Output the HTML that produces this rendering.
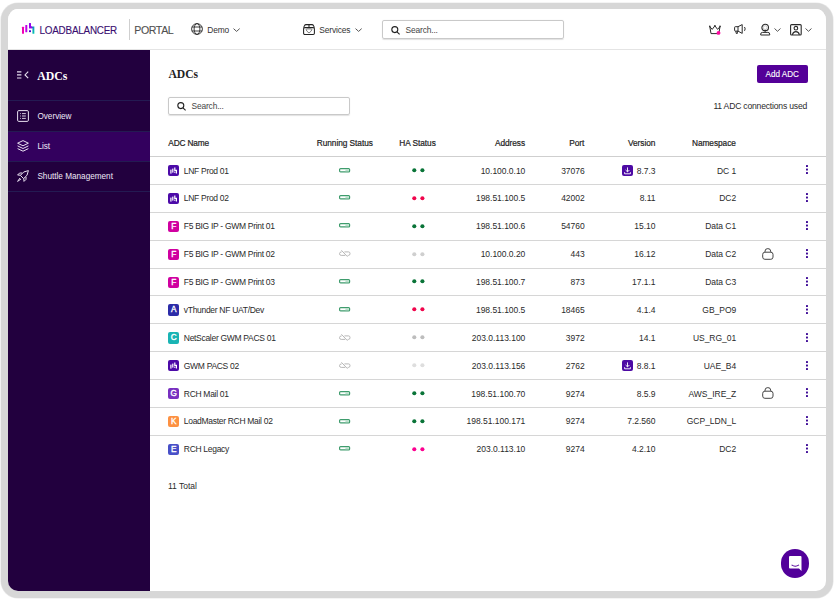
<!DOCTYPE html>
<html><head><meta charset="utf-8">
<style>
*{margin:0;padding:0;box-sizing:border-box}
html,body{width:834px;height:600px;background:#fff;overflow:hidden;font-family:"Liberation Sans",sans-serif;color:#2b2b2b}
.frame{position:absolute;left:1px;top:3px;width:832px;height:595px;border:7px solid #d7d7d7;border-top-width:6px;border-radius:17px;box-shadow:0 0 0 0.6px #e9e9e9;overflow:hidden;background:#fff}
.in{position:absolute;left:-8px;top:-9px;width:834px;height:600px}
.a{position:absolute;white-space:nowrap;line-height:normal}
svg{position:absolute;overflow:visible}
.hdr{position:absolute;left:8px;top:8px;width:818px;height:42px;background:#fff;border-bottom:1px solid #e4e4e4}
.side{position:absolute;left:8px;top:50px;width:142px;height:541px;background:#22003e}
.sep{position:absolute;left:8px;width:142px;height:1px;background:#241a52}
.act{position:absolute;left:8px;top:131px;width:142px;height:30px;background:#33005e}
.st{color:#eee8f6;font-size:8.2px}
.row{position:absolute;left:150px;width:676px;height:28px;border-bottom:1px solid #d6d6d6}
.row .a{font-size:8.5px;letter-spacing:-0.2px;color:#2a2a2a;top:8.55px}
.ic{position:absolute;left:18px;top:8.1px;width:11.3px;height:11.2px;border-radius:2px;color:#fff;font-size:8.2px;font-weight:normal;-webkit-text-stroke:0.35px #fff;text-align:center;line-height:12.3px}
.row .r{text-align:right;letter-spacing:-0.02px}
.th{font-size:8.3px;letter-spacing:-0.05px;color:#222;-webkit-text-stroke:0.2px #222}
</style></head><body>
<div class="frame"><div class="in">

<!-- HEADER -->
<div class="hdr"></div>
<!-- logo -->
<svg style="left:0;top:0" width="834" height="60">
 <defs>
  <linearGradient id="lg1" x1="0" y1="0" x2="1" y2="1"><stop offset="0" stop-color="#5a00e0"/><stop offset="1" stop-color="#00c8b0"/></linearGradient>
 </defs>
 <rect x="22" y="26.8" width="2" height="7" rx="0.5" fill="#f000b4"/>
 <rect x="25.3" y="25" width="2" height="7.3" rx="0.5" fill="#c000e8"/>
 <path d="M30 23.2 V27.4 H33.4 V33.7" fill="none" stroke="url(#lg1)" stroke-width="1.9"/>
 <path d="M30 23.2 V27.4 H32" fill="none" stroke="#9a00f0" stroke-width="1.9"/>
 <rect x="29" y="30.3" width="2" height="1.8" fill="#4a00d0"/>
 <line x1="129.5" y1="19" x2="129.5" y2="40" stroke="#cfcfcf" stroke-width="1"/>
</svg>
<div class="a" style="left:39.5px;top:24.9px;font-size:9.9px;color:#3a0e70;letter-spacing:-0.22px;-webkit-text-stroke:0.1px #3a0e70;transform:scaleY(1.1);transform-origin:0 8.9px">LOADBALANCER</div>
<div class="a" style="left:134.3px;top:23.9px;font-size:10.6px;letter-spacing:-0.4px;color:#505050;-webkit-text-stroke:0.1px #505050">PORTAL</div>
<!-- globe -->
<svg style="left:191px;top:23.3px" width="12" height="12" viewBox="0 0 12 12">
 <g fill="none" stroke="#2a2a2a" stroke-width="0.9">
  <circle cx="6" cy="6" r="5.4"/><ellipse cx="6" cy="6" rx="2.9" ry="5.4"/><line x1="0.9" y1="4" x2="11.1" y2="4"/><line x1="0.9" y1="8" x2="11.1" y2="8"/>
 </g>
</svg>
<div class="a" style="left:207.3px;top:25px;font-size:8.4px;letter-spacing:-0.15px;color:#333">Demo</div>
<svg style="left:233px;top:28px" width="8" height="4" viewBox="0 0 8 4"><path d="M0.5 0.6 L3.6 3.4 L6.7 0.6" fill="none" stroke="#444" stroke-width="0.9"/></svg>
<!-- services -->
<svg style="left:303px;top:23.8px" width="12" height="11" viewBox="0 0 12 11">
 <g fill="none" stroke="#222" stroke-width="1.05" stroke-linejoin="round">
  <path d="M0.6 3.6 L1.6 1.4 Q2 0.6 3 0.6 H9 Q10 0.6 10.4 1.4 L11.4 3.6"/><rect x="0.6" y="3.6" width="10.8" height="6.8" rx="1.2"/><line x1="6" y1="0.6" x2="6" y2="3.6"/>
 </g>
 <path d="M3.2 5.6 Q3.2 4.9 4 4.9 H8 Q8.8 4.9 8.8 5.6 Q8.8 7 6 9 Q3.2 7 3.2 5.6 Z" fill="none" stroke="#666" stroke-width="0.85"/>
</svg>
<div class="a" style="left:319.3px;top:24.8px;font-size:8.4px;letter-spacing:-0.15px;color:#333">Services</div>
<svg style="left:355px;top:28px" width="8" height="4" viewBox="0 0 8 4"><path d="M0.5 0.6 L3.6 3.4 L6.7 0.6" fill="none" stroke="#444" stroke-width="0.9"/></svg>
<!-- search -->
<div style="position:absolute;left:382px;top:20px;width:182px;height:18.5px;border:1px solid #c9c9c9;border-radius:2px;box-shadow:0 0.5px 1px rgba(0,0,0,.12)"></div>
<svg style="left:391px;top:25.5px" width="10" height="9" viewBox="0 0 10 9">
 <g fill="none" stroke="#222" stroke-width="1.1"><circle cx="3.8" cy="3.6" r="3"/><line x1="6" y1="5.8" x2="8.6" y2="8.4"/></g>
</svg>
<div class="a" style="left:405.6px;top:25.1px;font-size:8.4px;letter-spacing:-0.15px;color:#444">Search...</div>
<!-- right icons -->
<svg style="left:709px;top:24.8px" width="14" height="11" viewBox="0 0 14 11">
 <g fill="none" stroke="#2a2a2a" stroke-width="1" stroke-linejoin="round">
  <path d="M0.8 1.6 L3.2 4.4 L5.9 0.8 L8.6 4.4 L11 1.6 L9.8 8.6 H2 Z"/>
 </g>
 <g fill="#2a2a2a"><circle cx="0.8" cy="1.4" r="0.8"/><circle cx="5.9" cy="0.7" r="0.8"/><circle cx="11" cy="1.4" r="0.8"/></g>
 <circle cx="9.5" cy="7.9" r="1.95" fill="#ff08a0"/>
</svg>
<svg style="left:734px;top:24.3px" width="13" height="11" viewBox="0 0 13 11">
 <g fill="none" stroke="#2a2a2a" stroke-width="1" stroke-linejoin="round">
  <path d="M0.6 3.4 Q0.6 2.7 1.3 2.7 H4 L8.2 0.6 V9.4 L4 7.1 H1.3 Q0.6 7.1 0.6 6.4 Z"/><line x1="4" y1="2.7" x2="4" y2="7.1"/><path d="M1.8 7.1 L2.3 9.5 H3.3 L3.4 7.1"/><path d="M10.5 3 Q11.9 4.9 10.5 6.8"/>
 </g>
</svg>
<svg style="left:760px;top:24px" width="11" height="12" viewBox="0 0 11 12">
 <g fill="none" stroke="#2a2a2a">
  <circle cx="5.2" cy="3.6" r="3.3" stroke-width="1.1"/><circle cx="5.2" cy="3.6" r="1.9" stroke="#aaa" stroke-width="0.6"/><path d="M0.7 11 V10.1 Q0.7 8.4 2.6 8.4 H7.8 Q9.7 8.4 9.7 10.1 V11 Z" stroke-width="1"/>
 </g>
 <circle cx="5.2" cy="6.7" r="0.9" fill="#2a2a2a"/>
</svg>
<svg style="left:774px;top:27.6px" width="8" height="4" viewBox="0 0 8 4"><path d="M0.5 0.5 L3.5 3.3 L6.5 0.5" fill="none" stroke="#444" stroke-width="0.9"/></svg>
<svg style="left:790px;top:24px" width="12" height="12" viewBox="0 0 12 12">
 <g fill="none" stroke="#2a2a2a" stroke-width="1.1">
  <rect x="0.6" y="0.6" width="10.6" height="10.4" rx="1"/><circle cx="5.9" cy="4.2" r="1.8"/><path d="M2.4 10.8 Q3 7.6 5.9 7.6 Q8.8 7.6 9.4 10.8"/>
 </g>
</svg>
<svg style="left:805px;top:27.6px" width="8" height="4" viewBox="0 0 8 4"><path d="M0.5 0.5 L3.5 3.3 L6.5 0.5" fill="none" stroke="#444" stroke-width="0.9"/></svg>

<!-- SIDEBAR -->
<div class="side"></div>
<div class="act"></div>
<div class="sep" style="top:100px"></div>
<div class="sep" style="top:130.5px"></div>
<div class="sep" style="top:160.5px"></div>
<div class="sep" style="top:191px"></div>
<svg style="left:16.8px;top:71px" width="12" height="8" viewBox="0 0 12 8">
 <g stroke="#e8e0f0" stroke-width="1.2"><line x1="0" y1="0.8" x2="4.4" y2="0.8"/><line x1="0" y1="3.9" x2="4.4" y2="3.9"/><line x1="0" y1="7" x2="4.4" y2="7"/></g>
 <path d="M11.2 0.6 L8 3.9 L11.2 7.2" fill="none" stroke="#e8e0f0" stroke-width="1.1"/>
</svg>
<div class="a" style="left:37.3px;top:69.1px;font-family:'Liberation Serif',serif;font-weight:bold;font-size:11.8px;color:#fff">ADCs</div>
<!-- overview icon -->
<svg style="left:16.7px;top:110px" width="12" height="12" viewBox="0 0 12 12">
 <g fill="none" stroke="#e8e0f0" stroke-width="1"><rect x="0.6" y="0.6" width="10.8" height="10.8" rx="1.2"/></g>
 <g stroke="#e8e0f0" stroke-width="0.9"><line x1="3.2" y1="3.6" x2="4" y2="3.6"/><line x1="3.2" y1="6" x2="4" y2="6"/><line x1="3.2" y1="8.4" x2="4" y2="8.4"/><line x1="5" y1="3.6" x2="8.8" y2="3.6"/><line x1="5" y1="6" x2="8.8" y2="6"/><line x1="5" y1="8.4" x2="8.8" y2="8.4"/></g>
</svg>
<div class="a st" style="left:37.4px;top:112.2px">Overview</div>
<!-- layers icon -->
<svg style="left:16.7px;top:140px" width="12" height="12" viewBox="0 0 12 12">
 <g fill="none" stroke="#e8e0f0" stroke-width="1" stroke-linejoin="round"><path d="M6 0.6 L11.4 3.2 L6 5.8 L0.6 3.2 Z"/><path d="M0.6 5.9 L6 8.5 L11.4 5.9"/><path d="M0.6 8.6 L6 11.2 L11.4 8.6"/></g>
</svg>
<div class="a st" style="left:37.4px;top:142.2px">List</div>
<!-- rocket icon -->
<svg style="left:16.7px;top:170px" width="12" height="12" viewBox="0 0 12 12">
 <g fill="none" stroke="#e8e0f0" stroke-width="1" stroke-linejoin="round"><path d="M11.4 0.6 Q6 1 3.4 5.4 L6.6 8.6 Q11 6 11.4 0.6 Z"/><path d="M3.6 5.2 L0.6 5 L2.6 3 L5 3"/><path d="M6.8 8.4 L7 11.4 L9 9.4 L9 7"/><path d="M3 8 L0.6 11.4 L4 9"/></g>
</svg>
<div class="a st" style="left:37.4px;top:172.2px">Shuttle Management</div>

<!-- CONTENT -->
<div class="a" style="left:168.5px;top:67.9px;font-family:'Liberation Serif',serif;font-weight:bold;font-size:11.6px;color:#222">ADCs</div>
<div style="position:absolute;left:168px;top:97px;width:181.5px;height:18px;border:1px solid #c9c9c9;border-radius:2px;box-shadow:0 0.5px 1px rgba(0,0,0,.12)"></div>
<svg style="left:177px;top:102px" width="10" height="9" viewBox="0 0 10 9">
 <g fill="none" stroke="#222" stroke-width="1.1"><circle cx="3.8" cy="3.6" r="3"/><line x1="6" y1="5.8" x2="8.6" y2="8.4"/></g>
</svg>
<div class="a" style="left:191.5px;top:101.4px;font-size:8.4px;letter-spacing:-0.15px;color:#444">Search...</div>
<div style="position:absolute;left:757px;top:65px;width:51px;height:18px;background:#540098;border-radius:2px"></div>
<div class="a" style="left:765.6px;top:69.8px;font-size:8.1px;color:#fff;-webkit-text-stroke:0.1px #fff;transform:scaleY(1.1);transform-origin:0 7.3px">Add ADC</div>
<div class="a" style="left:713.4px;top:101.4px;font-size:8.6px;letter-spacing:-0.2px;color:#2a2a2a">11 ADC connections used</div>

<!-- TABLE HEADER -->
<div style="position:absolute;left:150px;top:156px;width:676px;height:1px;background:#cfcfcf"></div>
<div class="a th" style="left:168.3px;top:138.1px;letter-spacing:-0.15px">ADC Name</div>
<div class="a th" style="left:316.8px;top:138.1px">Running Status</div>
<div class="a th" style="left:399.3px;top:138.1px">HA Status</div>
<div class="a th" style="right:309px;top:138.1px">Address</div>
<div class="a th" style="right:249.8px;top:138.1px">Port</div>
<div class="a th" style="right:178.7px;top:138.1px">Version</div>
<div class="a th" style="right:98.2px;top:138.1px">Namespace</div>

<div class="row" style="top:157.0px;height:27.88px;"><div class="ic" style="background:#4c0aa8"><svg style="left:0;top:0" width="11" height="11" viewBox="0 0 11 11"><g fill="#fff"><rect x="2.3" y="4.6" width="1.2" height="4"/><rect x="4.2" y="3.6" width="1.2" height="4"/><path d="M6.2 2.4 H7.4 V4.8 H9 V8.6 H7.8 V5.9 H6.2 Z"/><rect x="6.2" y="6.6" width="1.2" height="1.2"/></g></svg></div><div class="a" style="left:33.8px;letter-spacing:-0.3px">LNF Prod 01</div><svg style="left:188.7px;top:10.6px" width="12" height="5" viewBox="0 0 12 5"><rect x="0.6" y="0.6" width="10" height="3.3" rx="1" fill="#fff" stroke="#3f9c6d" stroke-width="1.2"/><rect x="6.4" y="1.2" width="3.4" height="2.1" fill="#b9dfca"/></svg><svg style="left:262px;top:10.9px" width="11" height="5" viewBox="0 0 11 5"><circle cx="2.3" cy="2.2" r="2.05" fill="#0a7438"/><circle cx="10.4" cy="2.2" r="2.05" fill="#0a7438"/></svg><div class="a r" style="right:300.7px">10.100.0.10</div><div class="a r" style="right:241.3px">37076</div><div style="position:absolute;left:471.5px;top:7.7px;width:11.3px;height:11.6px;border-radius:2px;background:#4d0aa4"></div><svg style="left:471.5px;top:7.7px" width="11" height="12" viewBox="0 0 11 12"><g fill="none" stroke="#fff" stroke-width="0.9"><path d="M5.5 2.4 V6.8"/><path d="M3.6 5 L5.5 6.9 L7.4 5"/><path d="M2.6 7.2 V8.8 H8.4 V7.2"/></g></svg><div class="a r" style="right:170.5px">8.7.3</div><div class="a r" style="right:89.79999999999995px">DC 1</div><svg style="left:655.9px;top:8.4px" width="3" height="10" viewBox="0 0 3 10"><g fill="#3d0a96"><rect x="0" y="0" width="1.95" height="1.95" rx="0.5"/><rect x="0" y="3.5" width="1.95" height="1.95" rx="0.5"/><rect x="0" y="7" width="1.95" height="1.95" rx="0.5"/></g></svg></div>
<div class="row" style="top:184.88px;height:27.88px;"><div class="ic" style="background:#4c0aa8"><svg style="left:0;top:0" width="11" height="11" viewBox="0 0 11 11"><g fill="#fff"><rect x="2.3" y="4.6" width="1.2" height="4"/><rect x="4.2" y="3.6" width="1.2" height="4"/><path d="M6.2 2.4 H7.4 V4.8 H9 V8.6 H7.8 V5.9 H6.2 Z"/><rect x="6.2" y="6.6" width="1.2" height="1.2"/></g></svg></div><div class="a" style="left:33.8px;letter-spacing:-0.3px">LNF Prod 02</div><svg style="left:188.7px;top:10.6px" width="12" height="5" viewBox="0 0 12 5"><rect x="0.6" y="0.6" width="10" height="3.3" rx="1" fill="#fff" stroke="#3f9c6d" stroke-width="1.2"/><rect x="6.4" y="1.2" width="3.4" height="2.1" fill="#b9dfca"/></svg><svg style="left:262px;top:10.9px" width="11" height="5" viewBox="0 0 11 5"><circle cx="2.3" cy="2.2" r="2.05" fill="#f0054c"/><circle cx="10.4" cy="2.2" r="2.05" fill="#f0054c"/></svg><div class="a r" style="right:300.7px">198.51.100.5</div><div class="a r" style="right:241.3px">42002</div><div class="a r" style="right:170.5px">8.11</div><div class="a r" style="right:89.79999999999995px">DC2</div><svg style="left:655.9px;top:8.4px" width="3" height="10" viewBox="0 0 3 10"><g fill="#3d0a96"><rect x="0" y="0" width="1.95" height="1.95" rx="0.5"/><rect x="0" y="3.5" width="1.95" height="1.95" rx="0.5"/><rect x="0" y="7" width="1.95" height="1.95" rx="0.5"/></g></svg></div>
<div class="row" style="top:212.76px;height:27.88px;"><div class="ic" style="background:#d000a0">F</div><div class="a" style="left:33.8px;letter-spacing:-0.3px">F5 BIG IP - GWM Print 01</div><svg style="left:188.7px;top:10.6px" width="12" height="5" viewBox="0 0 12 5"><rect x="0.6" y="0.6" width="10" height="3.3" rx="1" fill="#fff" stroke="#3f9c6d" stroke-width="1.2"/><rect x="6.4" y="1.2" width="3.4" height="2.1" fill="#b9dfca"/></svg><svg style="left:262px;top:10.9px" width="11" height="5" viewBox="0 0 11 5"><circle cx="2.3" cy="2.2" r="2.05" fill="#0a7438"/><circle cx="10.4" cy="2.2" r="2.05" fill="#0a7438"/></svg><div class="a r" style="right:300.7px">198.51.100.6</div><div class="a r" style="right:241.3px">54760</div><div class="a r" style="right:170.5px">15.10</div><div class="a r" style="right:89.79999999999995px">Data C1</div><svg style="left:655.9px;top:8.4px" width="3" height="10" viewBox="0 0 3 10"><g fill="#3d0a96"><rect x="0" y="0" width="1.95" height="1.95" rx="0.5"/><rect x="0" y="3.5" width="1.95" height="1.95" rx="0.5"/><rect x="0" y="7" width="1.95" height="1.95" rx="0.5"/></g></svg></div>
<div class="row" style="top:240.64px;height:27.88px;"><div class="ic" style="background:#d000a0">F</div><div class="a" style="left:33.8px;letter-spacing:-0.3px">F5 BIG IP - GWM Print 02</div><svg style="left:188.7px;top:9.7px" width="12" height="8" viewBox="0 0 12 8"><g fill="none" stroke="#b3b3b3" stroke-width="0.95"><path d="M2.6 1.9 Q0.5 2 0.5 3.6 Q0.5 5.4 2.2 5.4 H6.2"/><path d="M5.4 1.9 H9.6 Q11 1.9 11 3.6 Q11 5.4 9.6 5.4 H8.6"/><line x1="2.4" y1="0.3" x2="8.5" y2="6.7"/></g></svg><svg style="left:262px;top:10.9px" width="11" height="5" viewBox="0 0 11 5"><circle cx="2.3" cy="2.2" r="2.05" fill="#cfcfcf"/><circle cx="10.4" cy="2.2" r="2.05" fill="#cfcfcf"/></svg><div class="a r" style="right:300.7px">10.100.0.20</div><div class="a r" style="right:241.3px">443</div><div class="a r" style="right:170.5px">16.12</div><div class="a r" style="right:89.79999999999995px">Data C2</div><svg style="left:611.5px;top:7.4px" width="12" height="12" viewBox="0 0 12 12"><g fill="none" stroke="#444" stroke-width="1"><rect x="0.7" y="4.2" width="10.3" height="7.1" rx="2.2"/><path d="M3 4.2 V3.2 Q3 0.6 5.85 0.6 Q8.7 0.6 8.7 3.2 V4.2"/></g></svg><svg style="left:655.9px;top:8.4px" width="3" height="10" viewBox="0 0 3 10"><g fill="#3d0a96"><rect x="0" y="0" width="1.95" height="1.95" rx="0.5"/><rect x="0" y="3.5" width="1.95" height="1.95" rx="0.5"/><rect x="0" y="7" width="1.95" height="1.95" rx="0.5"/></g></svg></div>
<div class="row" style="top:268.52px;height:27.88px;"><div class="ic" style="background:#d000a0">F</div><div class="a" style="left:33.8px;letter-spacing:-0.3px">F5 BIG IP - GWM Print 03</div><svg style="left:188.7px;top:10.6px" width="12" height="5" viewBox="0 0 12 5"><rect x="0.6" y="0.6" width="10" height="3.3" rx="1" fill="#fff" stroke="#3f9c6d" stroke-width="1.2"/><rect x="6.4" y="1.2" width="3.4" height="2.1" fill="#b9dfca"/></svg><svg style="left:262px;top:10.9px" width="11" height="5" viewBox="0 0 11 5"><circle cx="2.3" cy="2.2" r="2.05" fill="#0a7438"/><circle cx="10.4" cy="2.2" r="2.05" fill="#0a7438"/></svg><div class="a r" style="right:300.7px">198.51.100.7</div><div class="a r" style="right:241.3px">873</div><div class="a r" style="right:170.5px">17.1.1</div><div class="a r" style="right:89.79999999999995px">Data C3</div><svg style="left:655.9px;top:8.4px" width="3" height="10" viewBox="0 0 3 10"><g fill="#3d0a96"><rect x="0" y="0" width="1.95" height="1.95" rx="0.5"/><rect x="0" y="3.5" width="1.95" height="1.95" rx="0.5"/><rect x="0" y="7" width="1.95" height="1.95" rx="0.5"/></g></svg></div>
<div class="row" style="top:296.4px;height:27.88px;"><div class="ic" style="background:#2c2ca8">A</div><div class="a" style="left:33.8px;letter-spacing:-0.3px">vThunder NF UAT/Dev</div><svg style="left:188.7px;top:10.6px" width="12" height="5" viewBox="0 0 12 5"><rect x="0.6" y="0.6" width="10" height="3.3" rx="1" fill="#fff" stroke="#3f9c6d" stroke-width="1.2"/><rect x="6.4" y="1.2" width="3.4" height="2.1" fill="#b9dfca"/></svg><svg style="left:262px;top:10.9px" width="11" height="5" viewBox="0 0 11 5"><circle cx="2.3" cy="2.2" r="2.05" fill="#f0054c"/><circle cx="10.4" cy="2.2" r="2.05" fill="#f0054c"/></svg><div class="a r" style="right:300.7px">198.51.100.5</div><div class="a r" style="right:241.3px">18465</div><div class="a r" style="right:170.5px">4.1.4</div><div class="a r" style="right:89.79999999999995px">GB_PO9</div><svg style="left:655.9px;top:8.4px" width="3" height="10" viewBox="0 0 3 10"><g fill="#3d0a96"><rect x="0" y="0" width="1.95" height="1.95" rx="0.5"/><rect x="0" y="3.5" width="1.95" height="1.95" rx="0.5"/><rect x="0" y="7" width="1.95" height="1.95" rx="0.5"/></g></svg></div>
<div class="row" style="top:324.28px;height:27.88px;"><div class="ic" style="background:#1ab4b4">C</div><div class="a" style="left:33.8px;letter-spacing:-0.3px">NetScaler GWM PACS 01</div><svg style="left:188.7px;top:9.7px" width="12" height="8" viewBox="0 0 12 8"><g fill="none" stroke="#b3b3b3" stroke-width="0.95"><path d="M2.6 1.9 Q0.5 2 0.5 3.6 Q0.5 5.4 2.2 5.4 H6.2"/><path d="M5.4 1.9 H9.6 Q11 1.9 11 3.6 Q11 5.4 9.6 5.4 H8.6"/><line x1="2.4" y1="0.3" x2="8.5" y2="6.7"/></g></svg><svg style="left:262px;top:10.9px" width="11" height="5" viewBox="0 0 11 5"><circle cx="2.3" cy="2.2" r="2.05" fill="#bdbdbd"/><circle cx="10.4" cy="2.2" r="2.05" fill="#bdbdbd"/></svg><div class="a r" style="right:300.7px">203.0.113.100</div><div class="a r" style="right:241.3px">3972</div><div class="a r" style="right:170.5px">14.1</div><div class="a r" style="right:89.79999999999995px">US_RG_01</div><svg style="left:655.9px;top:8.4px" width="3" height="10" viewBox="0 0 3 10"><g fill="#3d0a96"><rect x="0" y="0" width="1.95" height="1.95" rx="0.5"/><rect x="0" y="3.5" width="1.95" height="1.95" rx="0.5"/><rect x="0" y="7" width="1.95" height="1.95" rx="0.5"/></g></svg></div>
<div class="row" style="top:352.16px;height:27.88px;"><div class="ic" style="background:#4c0aa8"><svg style="left:0;top:0" width="11" height="11" viewBox="0 0 11 11"><g fill="#fff"><rect x="2.3" y="4.6" width="1.2" height="4"/><rect x="4.2" y="3.6" width="1.2" height="4"/><path d="M6.2 2.4 H7.4 V4.8 H9 V8.6 H7.8 V5.9 H6.2 Z"/><rect x="6.2" y="6.6" width="1.2" height="1.2"/></g></svg></div><div class="a" style="left:33.8px;letter-spacing:-0.3px">GWM PACS 02</div><svg style="left:188.7px;top:9.7px" width="12" height="8" viewBox="0 0 12 8"><g fill="none" stroke="#b3b3b3" stroke-width="0.95"><path d="M2.6 1.9 Q0.5 2 0.5 3.6 Q0.5 5.4 2.2 5.4 H6.2"/><path d="M5.4 1.9 H9.6 Q11 1.9 11 3.6 Q11 5.4 9.6 5.4 H8.6"/><line x1="2.4" y1="0.3" x2="8.5" y2="6.7"/></g></svg><svg style="left:262px;top:10.9px" width="11" height="5" viewBox="0 0 11 5"><circle cx="2.3" cy="2.2" r="2.05" fill="#dedede"/><circle cx="10.4" cy="2.2" r="2.05" fill="#dedede"/></svg><div class="a r" style="right:300.7px">203.0.113.156</div><div class="a r" style="right:241.3px">2762</div><div style="position:absolute;left:471.5px;top:7.7px;width:11.3px;height:11.6px;border-radius:2px;background:#4d0aa4"></div><svg style="left:471.5px;top:7.7px" width="11" height="12" viewBox="0 0 11 12"><g fill="none" stroke="#fff" stroke-width="0.9"><path d="M5.5 2.4 V6.8"/><path d="M3.6 5 L5.5 6.9 L7.4 5"/><path d="M2.6 7.2 V8.8 H8.4 V7.2"/></g></svg><div class="a r" style="right:170.5px">8.8.1</div><div class="a r" style="right:89.79999999999995px">UAE_B4</div><svg style="left:655.9px;top:8.4px" width="3" height="10" viewBox="0 0 3 10"><g fill="#3d0a96"><rect x="0" y="0" width="1.95" height="1.95" rx="0.5"/><rect x="0" y="3.5" width="1.95" height="1.95" rx="0.5"/><rect x="0" y="7" width="1.95" height="1.95" rx="0.5"/></g></svg></div>
<div class="row" style="top:380.04px;height:27.88px;"><div class="ic" style="background:#7830c0">G</div><div class="a" style="left:33.8px;letter-spacing:-0.3px">RCH Mail 01</div><svg style="left:188.7px;top:10.6px" width="12" height="5" viewBox="0 0 12 5"><rect x="0.6" y="0.6" width="10" height="3.3" rx="1" fill="#fff" stroke="#3f9c6d" stroke-width="1.2"/><rect x="6.4" y="1.2" width="3.4" height="2.1" fill="#b9dfca"/></svg><svg style="left:262px;top:10.9px" width="11" height="5" viewBox="0 0 11 5"><circle cx="2.3" cy="2.2" r="2.05" fill="#0a7438"/><circle cx="10.4" cy="2.2" r="2.05" fill="#0a7438"/></svg><div class="a r" style="right:300.7px">198.51.100.70</div><div class="a r" style="right:241.3px">9274</div><div class="a r" style="right:170.5px">8.5.9</div><div class="a r" style="right:89.79999999999995px">AWS_IRE_Z</div><svg style="left:611.5px;top:7.4px" width="12" height="12" viewBox="0 0 12 12"><g fill="none" stroke="#444" stroke-width="1"><rect x="0.7" y="4.2" width="10.3" height="7.1" rx="2.2"/><path d="M3 4.2 V3.2 Q3 0.6 5.85 0.6 Q8.7 0.6 8.7 3.2 V4.2"/></g></svg><svg style="left:655.9px;top:8.4px" width="3" height="10" viewBox="0 0 3 10"><g fill="#3d0a96"><rect x="0" y="0" width="1.95" height="1.95" rx="0.5"/><rect x="0" y="3.5" width="1.95" height="1.95" rx="0.5"/><rect x="0" y="7" width="1.95" height="1.95" rx="0.5"/></g></svg></div>
<div class="row" style="top:407.92px;height:27.88px;"><div class="ic" style="background:#fd9142">K</div><div class="a" style="left:33.8px;letter-spacing:-0.3px">LoadMaster RCH Mail 02</div><svg style="left:188.7px;top:10.6px" width="12" height="5" viewBox="0 0 12 5"><rect x="0.6" y="0.6" width="10" height="3.3" rx="1" fill="#fff" stroke="#3f9c6d" stroke-width="1.2"/><rect x="6.4" y="1.2" width="3.4" height="2.1" fill="#b9dfca"/></svg><svg style="left:262px;top:10.9px" width="11" height="5" viewBox="0 0 11 5"><circle cx="2.3" cy="2.2" r="2.05" fill="#0a7438"/><circle cx="10.4" cy="2.2" r="2.05" fill="#0a7438"/></svg><div class="a r" style="right:300.7px">198.51.100.171</div><div class="a r" style="right:241.3px">9274</div><div class="a r" style="right:170.5px">7.2.560</div><div class="a r" style="right:89.79999999999995px">GCP_LDN_L</div><svg style="left:655.9px;top:8.4px" width="3" height="10" viewBox="0 0 3 10"><g fill="#3d0a96"><rect x="0" y="0" width="1.95" height="1.95" rx="0.5"/><rect x="0" y="3.5" width="1.95" height="1.95" rx="0.5"/><rect x="0" y="7" width="1.95" height="1.95" rx="0.5"/></g></svg></div>
<div class="row" style="top:435.8px;height:27.88px;border-bottom:none"><div class="ic" style="background:#4850c8">E</div><div class="a" style="left:33.8px;letter-spacing:-0.3px">RCH Legacy</div><svg style="left:188.7px;top:10.6px" width="12" height="5" viewBox="0 0 12 5"><rect x="0.6" y="0.6" width="10" height="3.3" rx="1" fill="#fff" stroke="#3f9c6d" stroke-width="1.2"/><rect x="6.4" y="1.2" width="3.4" height="2.1" fill="#b9dfca"/></svg><svg style="left:262px;top:10.9px" width="11" height="5" viewBox="0 0 11 5"><circle cx="2.3" cy="2.2" r="2.05" fill="#fc0090"/><circle cx="10.4" cy="2.2" r="2.05" fill="#fc0090"/></svg><div class="a r" style="right:300.7px">203.0.113.10</div><div class="a r" style="right:241.3px">9274</div><div class="a r" style="right:170.5px">4.2.10</div><div class="a r" style="right:89.79999999999995px">DC2</div><svg style="left:655.9px;top:8.4px" width="3" height="10" viewBox="0 0 3 10"><g fill="#3d0a96"><rect x="0" y="0" width="1.95" height="1.95" rx="0.5"/><rect x="0" y="3.5" width="1.95" height="1.95" rx="0.5"/><rect x="0" y="7" width="1.95" height="1.95" rx="0.5"/></g></svg></div>

<div class="a" style="left:168px;top:480.6px;font-size:8.5px;color:#2a2a2a">11 Total</div>

<!-- chat -->
<div style="position:absolute;left:781px;top:549.2px;width:28.4px;height:28.4px;border-radius:50%;background:#52009a"></div>
<svg style="left:788.7px;top:555.8px" width="13" height="15" viewBox="0 0 13 15">
 <path d="M1 0 H11.5 Q12.5 0 12.5 1 V15 L10 12.6 H1 Q0 12.6 0 11.6 V1 Q0 0 1 0 Z" fill="#fff"/>
 <path d="M2.6 8.9 Q6.3 11.6 10 8.9" fill="none" stroke="#52009a" stroke-width="1.05"/>
</svg>

</div></div>
</body></html>
